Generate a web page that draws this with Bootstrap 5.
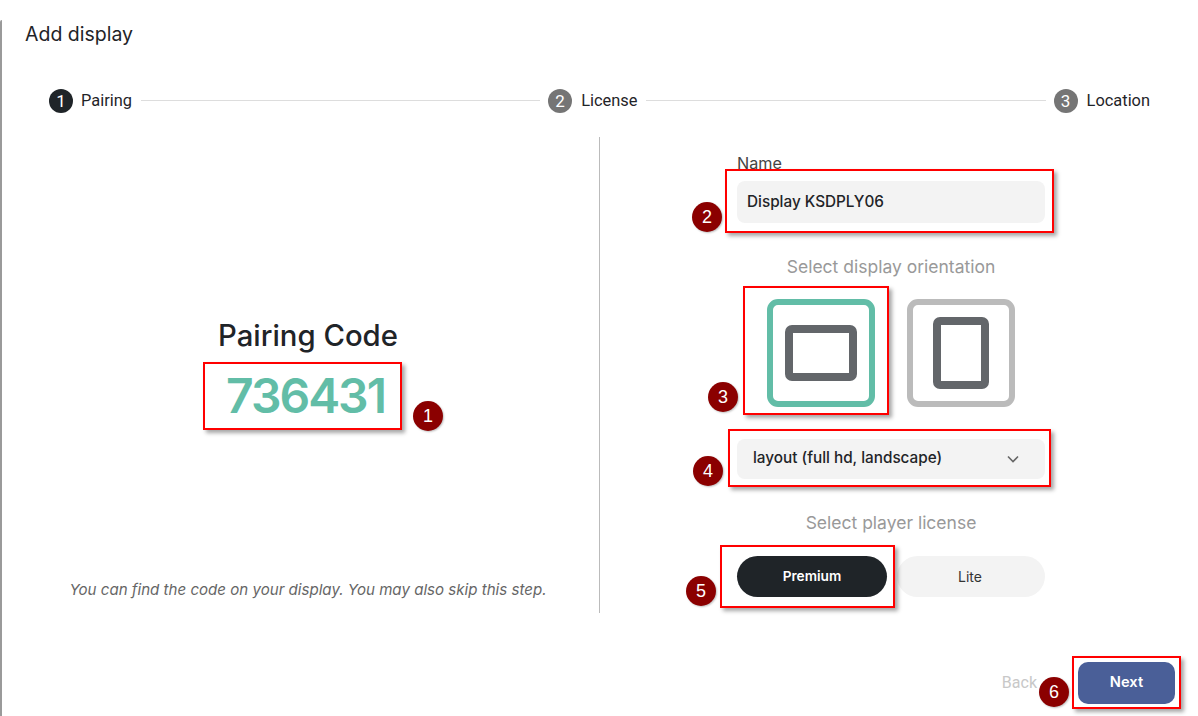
<!DOCTYPE html>
<html lang="en">
<head>
    <meta charset="UTF-8">
    <meta name="viewport" content="width=device-width, initial-scale=1.0">
    <title>Add display</title>
    <link href="https://cdn.jsdelivr.net/npm/bootstrap@5.3.0/dist/css/bootstrap.min.css" rel="stylesheet">
    <style>
        html, body { height: 716px; overflow: hidden; background: #fff; }
        body { font-family: Inter, "Liberation Sans", sans-serif; color: #1f2428; position: relative; }
        .wizard { height: 716px; border-left: 2px solid #9a9a9a; border-top-left-radius: 2px; }
        .wizard-title { font-size: 19.5px; line-height: 28px; font-weight: 400; margin: 20px 0 0 23px; }

        /* stepper */
        .stepper { height: 24px; margin: 41px 48px 0 47px; font-family: Roboto, sans-serif; font-size: 16.4px; }
        .step-num { width: 24px; height: 24px; border-radius: 50%; background: #757575; color: #fff; font-size: 17px; line-height: 24px; text-align: center; }
        .step-num.on { background: #1f2428; }
        .step-label { margin-left: 9px; }
        .step-label.first { margin-left: 8px; }
        .step-line { height: 1px; background: #ddd; margin: 0 8px 1px 9px; }

        /* body */
        .wizard-main { height: 476px; margin-top: 24px; padding-right: 16px; }
        .pair-col { width: 598px; padding: 180px 0 11px 15px; border-right: 1px solid #bbb; }
        .pair-head { font-size: 29.3px; line-height: 38px; font-weight: 500; margin: 0; }
        .pair-code { font-size: 48px; line-height: 64px; font-weight: 600; color: #62bda7; margin: 9px 5px 0 0; letter-spacing: -2px; }
        .pair-note { font-size: 15.1px; line-height: 24px; font-style: italic; color: #666; margin: 0; }
        .form-col { width: 308px; padding-top: 17px; }
        .name-label { font-size: 16.2px; line-height: 18px; color: #444; margin-bottom: 9px; display: block; }
        .field-grey.form-control, .field-grey.form-select { background-color: #f3f3f3; border: 0; border-radius: 8px; color: #1f2428; font-size: 15.3px; font-weight: 500; }
        .field-grey.form-control { height: 42px; padding: 0 10px 2px; }
        .field-grey.form-select { height: 40px; padding: 0 16px 1px; background-image: url("data:image/svg+xml,%3csvg xmlns='http://www.w3.org/2000/svg' viewBox='0 0 12 8'%3e%3cpath fill='none' stroke='%23666' stroke-width='1.6' d='M1 1.5l5 5 5-5'/%3e%3c/svg%3e"); background-size: 12px 8px; background-position: right 26px center; }
        .sub-head { font-size: 17.5px; line-height: 24px; color: #999; text-align: center; margin: 32px 0 0; }
        .tiles { gap: 32px; margin-top: 20px; margin-bottom: 32px; }
        .tile { width: 108px; height: 108px; border: 6px solid #bbb; border-radius: 11px; background: #fff; padding: 0; }
        .tile.on { border-color: #62bda7; }
        .tile-shape { border: 8px solid #63666a; border-radius: 7px; }
        .tile-shape.wide { width: 72px; height: 56px; }
        .tile-shape.tall { width: 56px; height: 72px; }
        .pills { gap: 10px; margin-top: 21px; }
        .pill-btn.btn { height: 41px; border: 0; border-radius: 21px; font-size: 14px; padding: 0; background: #f3f3f3; color: #333; }
        .pill-btn.premium { width: 150px; background: #1f2428; color: #fff; font-weight: 600; font-size: 13.7px; }
        .pill-btn.lite { width: 148px; padding: 0 2px 1px 0; }

        /* footer */
        .wizard-foot { margin-top: 49px; padding-right: 23px; gap: 41px; height: 42px; }
        .back-link { font-size: 16px; color: #c8c8c8; font-family: Roboto, sans-serif; }
        .next-btn.btn { width: 97px; height: 42px; padding: 0 0 2px; border: 0; border-radius: 10px; background: #4a5f98; color: #fff; font-size: 14.7px; font-weight: 600; }

        /* screenshot annotations on top of the page */
        .mark-box { position: absolute; border: 2px solid #f00; box-shadow: 3px 3px 4px rgba(0,0,0,.35); }
        .mark-num { position: absolute; width: 30px; height: 30px; margin: -15px 0 0 -15px; border-radius: 50%; background: #8b0000; color: #fff; font: 18px/30px "Liberation Sans", sans-serif; text-align: center; box-shadow: 1px 1px 2px rgba(0,0,0,.25); }
        .box-1 { left: 203px; top: 362px; width: 199px; height: 68px; }
        .box-2 { left: 725px; top: 169px; width: 329px; height: 64px; }
        .box-3 { left: 743px; top: 286px; width: 146px; height: 129px; }
        .box-4 { left: 728px; top: 429px; width: 323px; height: 58px; }
        .box-5 { left: 720px; top: 545px; width: 175px; height: 63px; }
        .box-6 { left: 1072px; top: 656px; width: 109px; height: 53px; }
        .num-1 { left: 428px; top: 416px; }
        .num-2 { left: 707px; top: 217px; }
        .num-3 { left: 723px; top: 397px; }
        .num-4 { left: 708px; top: 471px; }
        .num-5 { left: 701px; top: 591px; }
        .num-6 { left: 1054px; top: 692px; }
    </style>
</head>
<body>
    <div class="wizard">
        <h1 class="wizard-title">Add display</h1>

        <!-- stepper -->
        <div class="stepper d-flex align-items-center">
            <div class="step-num on">1</div>
            <span class="step-label first">Pairing</span>
            <div class="step-line flex-grow-1"></div>
            <div class="step-num">2</div>
            <span class="step-label">License</span>
            <div class="step-line flex-grow-1"></div>
            <div class="step-num">3</div>
            <span class="step-label">Location</span>
        </div>

        <div class="wizard-main d-flex">
            <!-- pairing code -->
            <div class="pair-col d-flex flex-column align-items-center text-center">
                <h2 class="pair-head">Pairing Code</h2>
                <p class="pair-code">736431</p>
                <p class="pair-note mt-auto">You can find the code on your display. You may also skip this step.</p>
            </div>

            <!-- form -->
            <div class="flex-grow-1 d-flex justify-content-center">
                <div class="form-col">
                    <label class="name-label" for="displayName">Name</label>
                    <input id="displayName" type="text" class="form-control field-grey" value="Display KSDPLY06">

                    <p class="sub-head">Select display orientation</p>
                    <div class="tiles d-flex justify-content-center">
                        <button class="tile on d-flex align-items-center justify-content-center" type="button"><span class="tile-shape wide"></span></button>
                        <button class="tile d-flex align-items-center justify-content-center" type="button"><span class="tile-shape tall"></span></button>
                    </div>

                    <select class="form-select field-grey">
                        <option>layout (full hd, landscape)</option>
                    </select>

                    <p class="sub-head">Select player license</p>
                    <div class="pills d-flex">
                        <button class="btn pill-btn premium" type="button">Premium</button>
                        <button class="btn pill-btn lite" type="button">Lite</button>
                    </div>
                </div>
            </div>
        </div>

        <div class="wizard-foot d-flex justify-content-end align-items-center">
            <span class="back-link">Back</span>
            <button class="btn next-btn" type="button">Next</button>
        </div>
    </div>

    <!-- annotations -->
    <div class="mark-box box-1"></div>
    <div class="mark-box box-2"></div>
    <div class="mark-box box-3"></div>
    <div class="mark-box box-4"></div>
    <div class="mark-box box-5"></div>
    <div class="mark-box box-6"></div>
    <div class="mark-num num-1">1</div>
    <div class="mark-num num-2">2</div>
    <div class="mark-num num-3">3</div>
    <div class="mark-num num-4">4</div>
    <div class="mark-num num-5">5</div>
    <div class="mark-num num-6">6</div>

    <script src="https://cdn.jsdelivr.net/npm/bootstrap@5.3.0/dist/js/bootstrap.bundle.min.js"></script>
</body>
</html>
